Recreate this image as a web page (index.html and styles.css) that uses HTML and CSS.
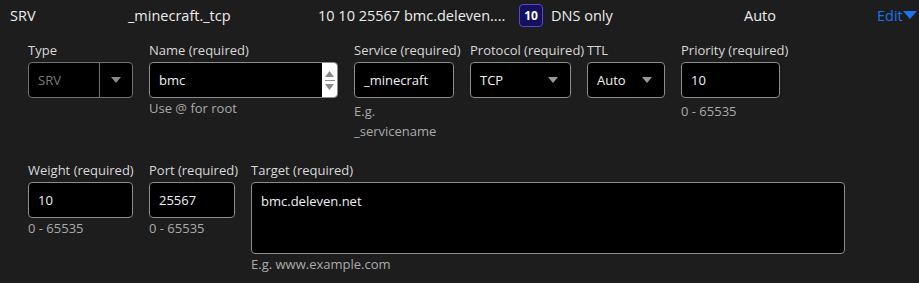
FILE: index.html
```html
<!DOCTYPE html>
<html lang="en">
<head>
  <meta charset="UTF-8" />
  <title>DNS record - SRV</title>
  <link rel="stylesheet" href="styles.css">
</head>
<body>
  <div class="record">
    <div class="summary">
      <span class="col-type">SRV</span>
      <span class="col-name">_minecraft._tcp</span>
      <span class="col-content">10 10 25567 bmc.deleven....</span>
      <span class="col-proxy"><span class="badge">10</span>DNS only</span>
      <span class="col-ttl">Auto</span>
      <a class="edit" href="#">Edit<svg width="14" height="9" viewBox="0 0 14 9"><path d="M0 0h14L7 8z" fill="#1a73f0"/></svg></a>
    </div>

    <form class="editor">
      <div class="row">
        <div class="field w-type">
          <label>Type</label>
          <div class="select disabled"><span>SRV</span><i class="split"></i><b class="caret"></b></div>
        </div>
        <div class="field w-name">
          <label>Name (required)</label>
          <div class="input spin">
            <span>bmc</span>
            <div class="spinner">
              <svg width="9" height="6" viewBox="0 0 9 6"><path d="M4.5 0L9 6H0z" fill="#8a8a8a"/></svg>
              <i></i>
              <svg width="9" height="6" viewBox="0 0 9 6"><path d="M0 0h9L4.5 6z" fill="#8a8a8a"/></svg>
            </div>
          </div>
          <p class="hint tight">Use @ for root</p>
        </div>
        <div class="field w-service">
          <label>Service (required)</label>
          <div class="input"><span>_minecraft</span></div>
          <p class="hint">E.g.<br>_servicename</p>
        </div>
        <div class="field w-proto">
          <label>Protocol (required)</label>
          <div class="select"><span>TCP</span><b class="caret"></b></div>
        </div>
        <div class="field w-ttl">
          <label>TTL</label>
          <div class="select"><span>Auto</span><b class="caret"></b></div>
        </div>
        <div class="field w-prio">
          <label>Priority (required)</label>
          <div class="input"><span>10</span></div>
          <p class="hint">0 - 65535</p>
        </div>
      </div>

      <div class="row">
        <div class="field w-type">
          <label>Weight (required)</label>
          <div class="input"><span>10</span></div>
          <p class="hint tight">0 - 65535</p>
        </div>
        <div class="field w-port">
          <label>Port (required)</label>
          <div class="input"><span>25567</span></div>
          <p class="hint tight">0 - 65535</p>
        </div>
        <div class="field w-target">
          <label>Target (required)</label>
          <div class="input area"><span>bmc.deleven.net</span></div>
          <p class="hint tight">E.g. www.example.com</p>
        </div>
      </div>
    </form>
  </div>
</body>
</html>
```

FILE: styles.css
```css
* {
  margin: 0;
  padding: 0;
  box-sizing: border-box;
}

body {
  background: #1d1d1d;
  color: #e6e6e6;
  font-family: "Open Sans", "Noto Sans", sans-serif;
  font-size: 13px;
}

.summary {
  display: flex;
  align-items: center;
  height: 30px;
  padding-left: 10px;
  font-size: 14.5px;
  color: #ececec;
}

.col-type { width: 118px; }
.col-name { width: 190px; }
.col-content { width: 201px; white-space: nowrap; overflow: hidden; }
.col-proxy { width: 225px; display: flex; align-items: center; }
.col-ttl { width: 133px; }

.badge {
  display: inline-flex;
  align-items: center;
  justify-content: center;
  width: 24px;
  height: 23px;
  margin-right: 8px;
  border: 1px solid #5547d6;
  border-radius: 4px;
  background: #14105c;
  color: #fff;
  font-size: 12px;
  font-weight: 700;
}

.edit {
  display: flex;
  align-items: center;
  color: #1a73f0;
  text-decoration: none;
}

.editor {
  padding: 11px 0 0 28px;
}

.row {
  display: flex;
  gap: 16px;
  margin-bottom: 20px;
}

.field label {
  display: block;
  height: 20px;
  white-space: nowrap;
  color: #d8d8d8;
}

.w-type { width: 105px; }
.w-name { width: 189px; }
.w-service { width: 100px; }
.w-proto { width: 101px; }
.w-ttl { width: 78px; }
.w-prio { width: 99px; }
.w-port { width: 86px; }
.w-target { width: 594px; }

.input, .select {
  display: flex;
  align-items: center;
  height: 36px;
  margin-top: 1px;
  padding-left: 9px;
  background: #000;
  border: 1px solid #8c8c8c;
  border-radius: 4px;
  color: #f0f0f0;
  position: relative;
}

.input.area {
  height: 72px;
  align-items: flex-start;
  padding-top: 9px;
}

.spin { padding-right: 0; }
.spin span { flex: 1; }

.spinner {
  width: 15px;
  height: 34px;
  background: #fff;
  display: flex;
  flex-direction: column;
  align-items: center;
  justify-content: center;
  gap: 3px;
  border-radius: 0 3px 3px 0;
}

.spinner i {
  display: block;
  width: 10px;
  height: 1px;
  background: #8a8a8a;
}

.select span { flex: 1; }

.select.disabled {
  border-color: #707070;
  color: #7a7a7a;
  padding-right: 0;
}

.split {
  width: 1px;
  height: 34px;
  background: #707070;
  margin-right: 11px;
}

.caret {
  width: 0;
  height: 0;
  border-left: 5px solid transparent;
  border-right: 5px solid transparent;
  border-top: 6px solid #9a9a9a;
  margin-right: 12px;
}

.select.disabled .caret {
  border-top-color: #8a8a8a;
  margin-right: 11px;
}

.hint {
  margin-top: 3px;
  line-height: 20px;
  color: #aaaaaa;
}

.hint.tight {
  margin-top: 0;
}
```
